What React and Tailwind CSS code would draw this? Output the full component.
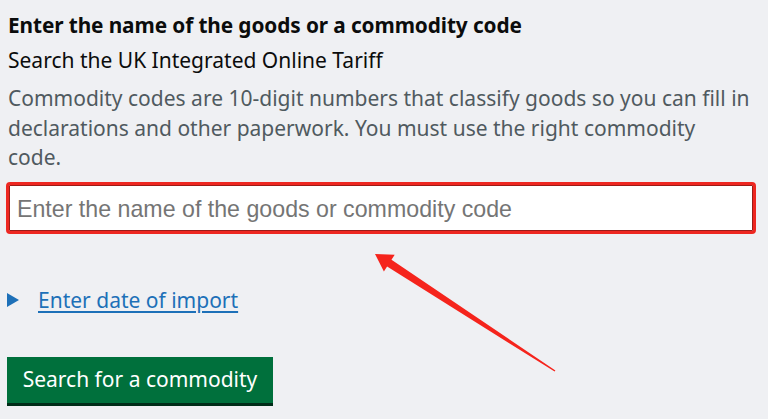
import React from 'react';

const font = { fontFamily: '"Noto Sans", Arial, sans-serif' };

export default function App() {
  return (
    <div className="relative w-[768px] h-[419px] overflow-hidden bg-[#eff0f3]" style={font}>
      <div className="pl-[8px] pt-[11px]">
        <h1 className="text-[20.8px] leading-[28px] font-bold text-[#0b0c0c] tracking-[-0.1px]">
          Enter the name of the goods or a commodity code
        </h1>
        <p className="mt-[7px] text-[21px] leading-[28px] text-[#0b0c0c]">
          Search the UK Integrated Online Tariff
        </p>
        <p className="mt-[10px] w-[743px] text-[21px] leading-[29.5px] text-[#505a5f]">
          Commodity codes are 10-digit numbers that classify goods so you can fill in declarations and other paperwork. You must use the right commodity code.
        </p>
      </div>

      <div className="mt-[9px] ml-[6px] w-[750px] h-[52px] rounded-[4px] border-[3px] border-[#ee2721] bg-white shadow-[inset_0_0_0_1px_#9c1c17] flex items-center">
        <input
          className="w-full h-full bg-transparent pl-[8px] pt-[4px] text-[23.2px] outline-none placeholder:text-[#757575]"
          style={{ fontFamily: '"Liberation Sans", Arial, sans-serif' }}
          placeholder="Enter the name of the goods or commodity code"
        />
      </div>

      <div className="mt-[52px] ml-[7px] flex items-center gap-[19px]">
        <span className="w-0 h-0 border-y-[7px] border-y-transparent border-l-[12px] border-l-[#1d70b8]" />
        <a href="#" className="text-[21px] leading-[28px] text-[#1d70b8] underline underline-offset-[3px]">
          Enter date of import
        </a>
      </div>

      <button className="mt-[43px] ml-[7px] w-[266px] h-[46px] bg-[#00703c] text-white text-[21px] shadow-[0_3px_0_#002d18]">
        Search for a commodity
      </button>

      <svg className="absolute left-0 top-0 pointer-events-none" width="768" height="419">
        <polygon
          fill="#f5241c"
          points="375,254 394.7,254.8 391.5,259.8 555.4,370.4 554.6,371.6 387.1,266.6 383.9,271.6"
        />
      </svg>
    </div>
  );
}
